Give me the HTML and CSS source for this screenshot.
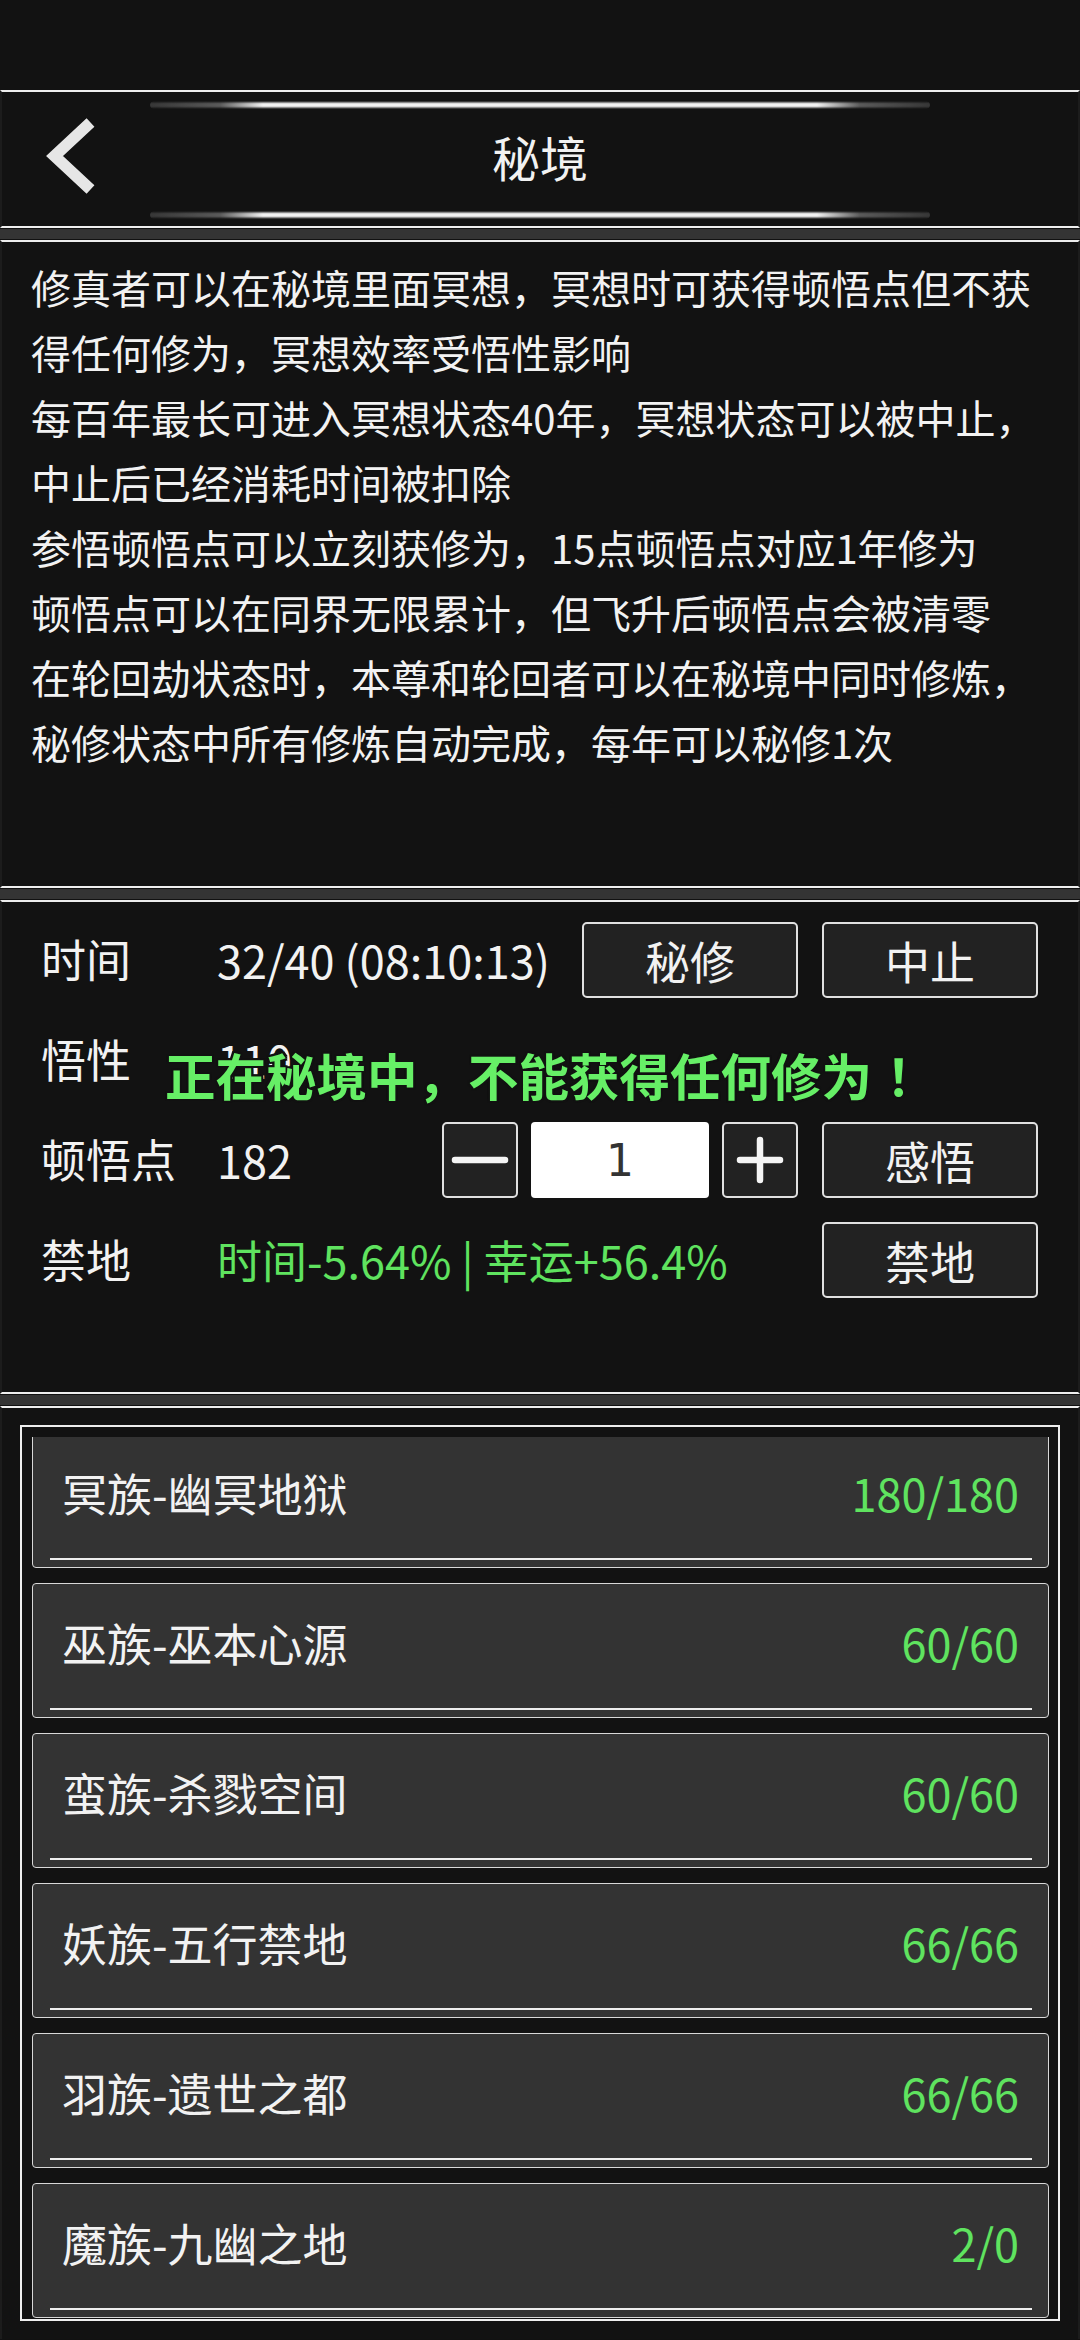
FILE: index.html
```html
<!DOCTYPE html>
<html lang="zh-CN">
<head>
<meta charset="utf-8">
<title>秘境</title>
<link rel="stylesheet" href="styles.css">
</head>
<body>
<div class="status"></div>
<header class="header">
  <div class="glow"></div>
  <div class="head-row">
    <svg class="back" width="60" height="80" viewBox="0 0 60 80"><polyline points="50.5,6.5 14.5,40 50.5,73.5" fill="none" stroke="#e6e6e6" stroke-width="11.5" stroke-linejoin="miter" stroke-linecap="butt"/></svg>
    <h1 class="title">秘境</h1>
    <span></span>
  </div>
  <div class="glow"></div>
</header>
<div class="sep"></div>
<section class="panel intro">
  <p>修真者可以在秘境里面冥想，冥想时可获得顿悟点但不获得任何修为，冥想效率受悟性影响</p>
  <p>每百年最长可进入冥想状态40年，冥想状态可以被中止，</p>
  <p>中止后已经消耗时间被扣除</p>
  <p>参悟顿悟点可以立刻获修为，15点顿悟点对应1年修为</p>
  <p>顿悟点可以在同界无限累计，但飞升后顿悟点会被清零</p>
  <p>在轮回劫状态时，本尊和轮回者可以在秘境中同时修炼，</p>
  <p>秘修状态中所有修炼自动完成，每年可以秘修1次</p>
</section>
<div class="sep"></div>
<section class="panel controls">
  <div class="row">
    <span class="label">时间</span>
    <span class="value">32/40 (08:10:13)</span>
    <button class="btn">秘修</button>
    <button class="btn">中止</button>
  </div>
  <div class="row">
    <span class="label">悟性</span>
    <span class="value">110</span>
  </div>
  <div class="row">
    <span class="label">顿悟点</span>
    <span class="value">182</span>
    <div class="stepper">
      <button class="btn sq"><svg width="60" height="20" viewBox="0 0 60 20"><line x1="5" y1="10" x2="55" y2="10" stroke="#f5f5f5" stroke-width="6.5" stroke-linecap="round"/></svg></button>
      <div class="qty">1</div>
      <button class="btn sq"><svg width="50" height="50" viewBox="0 0 50 50"><line x1="5" y1="25" x2="45" y2="25" stroke="#f5f5f5" stroke-width="6.5" stroke-linecap="round"/><line x1="25" y1="5" x2="25" y2="45" stroke="#f5f5f5" stroke-width="6.5" stroke-linecap="round"/></svg></button>
    </div>
    <button class="btn">感悟</button>
  </div>
  <div class="row">
    <span class="label">禁地</span>
    <span class="value green">时间-5.64% | 幸运+56.4%</span>
    <button class="btn">禁地</button>
  </div>
  <div class="toast">正在秘境中，不能获得任何修为<span class="bang">！</span></div>
</section>
<div class="sep"></div>
<section class="panel list-panel">
  <div class="list-box">
    <div class="viewport">
      <ul class="list">
        <li class="item"><div class="item-row"><span>冥族-幽冥地狱</span><span class="green">180/180</span></div><div class="underline"></div></li>
        <li class="item"><div class="item-row"><span>巫族-巫本心源</span><span class="green">60/60</span></div><div class="underline"></div></li>
        <li class="item"><div class="item-row"><span>蛮族-杀戮空间</span><span class="green">60/60</span></div><div class="underline"></div></li>
        <li class="item"><div class="item-row"><span>妖族-五行禁地</span><span class="green">66/66</span></div><div class="underline"></div></li>
        <li class="item"><div class="item-row"><span>羽族-遗世之都</span><span class="green">66/66</span></div><div class="underline"></div></li>
        <li class="item"><div class="item-row"><span>魔族-九幽之地</span><span class="green">2/0</span></div><div class="underline"></div></li>
      </ul>
    </div>
  </div>
</section>
</body>
</html>
```

FILE: styles.css
```css
* { box-sizing: border-box; }
html, body {
  margin: 0;
  padding: 0;
  background: #111;
  width: 1080px;
  overflow: hidden;
}
body {
  font-family: "Noto Sans CJK SC", "Noto Sans", sans-serif;
  color: #f2f2f2;
  height: 2340px;
}
.status {
  height: 90px;
  background: #121212;
}
.header {
  height: 138px;
  border-top: 2px solid #eeeeee;
  border-bottom: 2px solid #eeeeee;
  border-left: 2px solid #1c1c1c;
  border-right: 2px solid #1c1c1c;
  background: #121212;
  display: flex;
  flex-direction: column;
}
.glow {
  width: 780px;
  height: 8px;
  margin: 9px auto 0;
  border-radius: 4px;
  background: linear-gradient(to right, rgba(80,80,80,0.6) 0%, #5a5a5a 9%, #f2f2f2 14.5%, #f2f2f2 85.5%, #5a5a5a 91%, rgba(80,80,80,0.6) 100%);
  -webkit-mask-image: linear-gradient(to bottom, transparent 0%, #000 35%, #000 65%, transparent 100%);
  mask-image: linear-gradient(to bottom, transparent 0%, #000 35%, #000 65%, transparent 100%);
}
.glow:last-child {
  margin: 0 auto 7px;
}
.head-row {
  flex: 1;
  display: grid;
  grid-template-columns: 1fr auto 1fr;
  align-items: center;
  margin-bottom: 8px;
}
.back {
  display: block;
  margin-left: 38px;
}
.title {
  margin: 0;
  font-size: 48px;
  font-weight: normal;
  line-height: 60px;
  color: #f2f2f2;
}
.sep {
  height: 12px;
  background: #343434;
  border-top: 1px solid #111;
  border-bottom: 1px solid #111;
}
.panel {
  background: #121212;
  border-top: 2px solid #eeeeee;
  border-bottom: 2px solid #eeeeee;
  border-left: 2px solid #1c1c1c;
  border-right: 2px solid #1c1c1c;
}
.intro {
  height: 648px;
  padding: 13px 38px 0 29px;
}
.intro p {
  margin: 0;
  font-size: 40px;
  line-height: 65px;
  color: #f2f2f2;
}
.controls {
  position: relative;
  height: 494px;
  padding: 20px 40px 0 39px;
  display: flex;
  flex-direction: column;
  gap: 24px;
}
.row {
  height: 76px;
  display: flex;
  align-items: center;
  flex: none;
}
.label {
  width: 176px;
  font-size: 45px;
  line-height: 60px;
  color: #f2f2f2;
  margin-top: -2px;
}
.value {
  flex: 1;
  font-size: 45px;
  line-height: 60px;
  color: #f2f2f2;
  white-space: nowrap;
}
.green {
  color: #5fe35f;
}
.btn {
  width: 216px;
  height: 76px;
  margin: 0 0 0 24px;
  padding: 0;
  background: #222;
  border: 2px solid #e0e0e0;
  border-radius: 5px;
  color: #f2f2f2;
  font-family: "Noto Sans CJK SC", "Noto Sans", sans-serif;
  font-size: 45px;
  line-height: 1;
  display: flex;
  align-items: center;
  justify-content: center;
  flex: none;
}
.stepper {
  display: flex;
  gap: 13px;
  flex: none;
}
.btn.sq {
  width: 76px;
  margin: 0;
}
.btn.sq svg {
  display: block;
}
.qty {
  width: 178px;
  height: 76px;
  background: #fff;
  border-radius: 4px;
  color: #333;
  font-family: "DejaVu Sans", sans-serif;
  font-size: 44px;
  display: flex;
  align-items: center;
  justify-content: center;
}
.toast {
  position: absolute;
  left: 163px;
  top: 142px;
  font-size: 50.5px;
  font-weight: bold;
  line-height: 60px;
  color: #66ef66;
  white-space: nowrap;
  text-shadow: 2px 2px 0 #111, -2px -2px 0 #111, 2px -2px 0 #111, -2px 2px 0 #111, 0 2px 0 #111, 0 -2px 0 #111, 2px 0 0 #111, -2px 0 0 #111;
}
.bang {
  display: inline-block;
  padding-left: 14px;
}
.list-panel {
  padding: 17px 18px 18px;
  border-bottom: none;
}
.list-box {
  border: 2px solid #eeeeee;
  padding: 10px 9px 0 10px;
}
.viewport {
  height: 882px;
  overflow: hidden;
}
.list {
  list-style: none;
  margin: -4px 0 0;
  padding: 0;
}
.item {
  height: 135px;
  margin-bottom: 15px;
  background: #333;
  border: 1px solid #d8d8d8;
  border-radius: 4px;
  display: flex;
  flex-direction: column;
}
.item-row {
  margin-top: 29px;
  height: 60px;
  padding: 0 29px;
  display: flex;
  justify-content: space-between;
  align-items: center;
  font-size: 45px;
  line-height: 60px;
  color: #f2f2f2;
}
.underline {
  height: 2px;
  margin: 35px 16px 0 17px;
  background: #eeeeee;
}
```
